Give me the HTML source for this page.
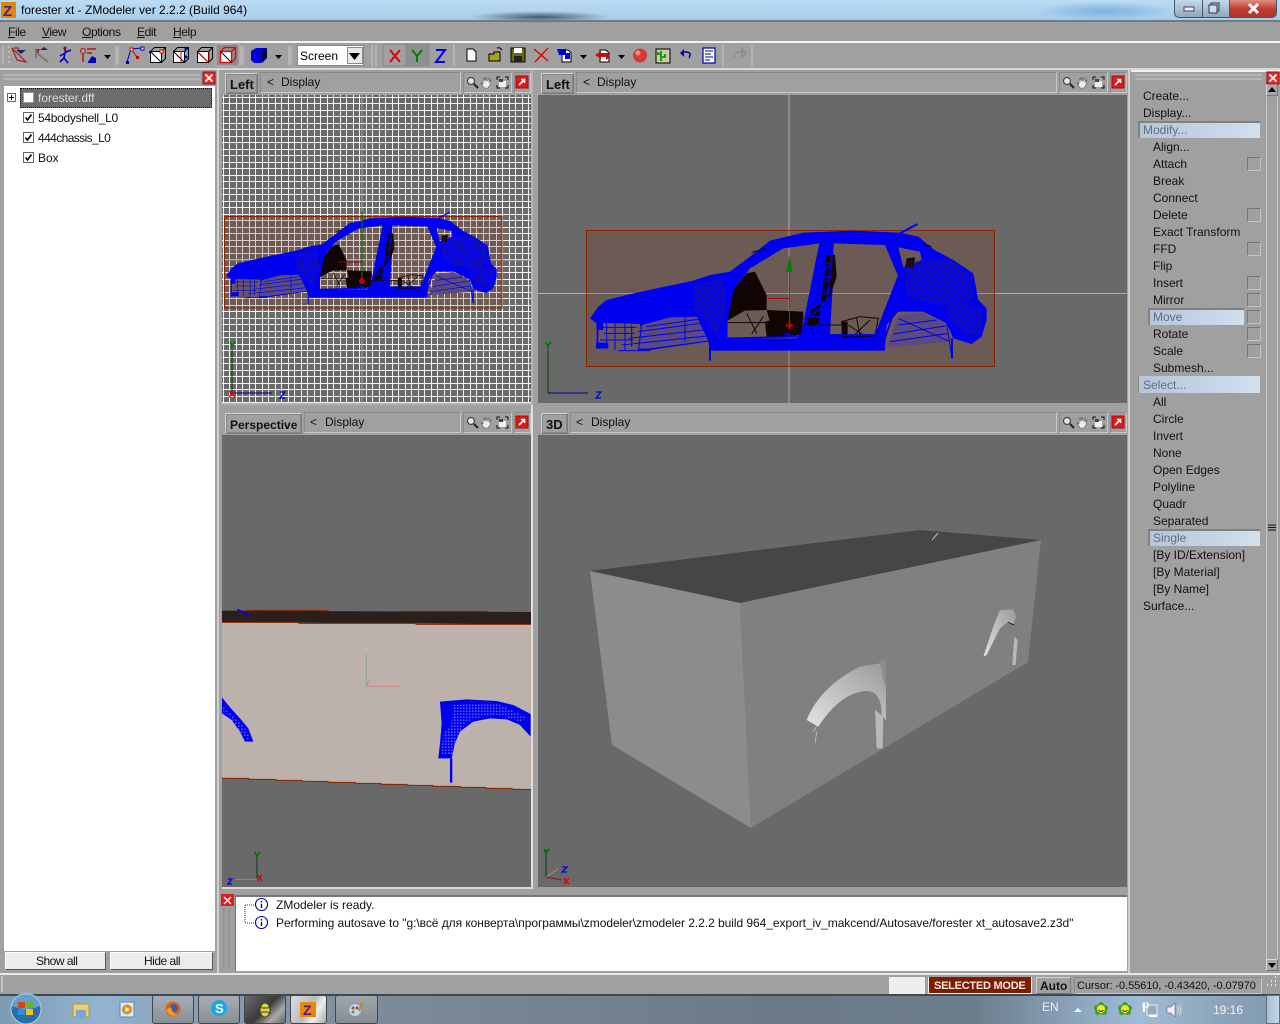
<!DOCTYPE html>
<html><head><meta charset="utf-8"><title>ZModeler</title>
<style>
html,body{margin:0;padding:0;width:1280px;height:1024px;overflow:hidden;background:#a0a0a0}
body{position:relative;font-family:"Liberation Sans","Noto Sans CJK SC",sans-serif;font-size:12px;color:#111}
.t{position:absolute;white-space:nowrap;line-height:14px;height:14px}
.m{letter-spacing:-.4px}
.b{font-weight:bold}
.h{position:absolute;box-sizing:border-box}
svg{position:absolute;left:0;top:0}
.hl{position:absolute;background:linear-gradient(90deg,#b4c6d8,#d2e0ee);border-top:2px solid #808080;border-left:2px solid #808080;box-sizing:border-box}
.g{color:#5f6e80}
.tab{position:absolute;box-sizing:border-box;border:1px solid #d4d4d4;border-right-color:#7a7a7a;border-bottom-color:#7a7a7a;outline:1px solid #888;outline-offset:-2px}
.grp{position:absolute;box-sizing:border-box;border:1px solid #8a8a8a;border-right-color:#c8c8c8;border-bottom-color:#c8c8c8}
.sq{position:absolute;width:14px;height:14px;box-sizing:border-box;border:1px solid #777;border-right-color:#c4c4c4;border-bottom-color:#c4c4c4;left:1247px}
</style></head><body>

<!-- title bar -->
<div class="h" style="left:0;top:0;width:1280px;height:21px;background:linear-gradient(180deg,#bcdcf4,#a6cbe8)"></div>
<div class="h" style="left:470px;top:11px;width:140px;height:12px;border-radius:50%;background:radial-gradient(ellipse at center,rgba(40,50,60,.75),rgba(40,50,60,0) 70%)"></div>
<div class="h" style="left:1040px;top:2px;width:130px;height:18px;background:radial-gradient(ellipse at center,rgba(110,170,220,.8),rgba(110,170,220,0) 75%)"></div>
<div class="h" style="left:0;top:20px;width:1280px;height:2px;background:#6e7c88"></div>
<div class="t" style="left:21px;top:3px;font-size:12px;color:#000">forester xt - ZModeler ver 2.2.2 (Build 964)</div>

<!-- window buttons -->
<div class="h" style="left:1174px;top:0;width:29px;height:18px;background:linear-gradient(180deg,#c4d8ea,#8fa8be);border:1px solid #47566a;border-top:0;border-radius:0 0 0 5px"></div>
<div class="h" style="left:1203px;top:0;width:27px;height:18px;background:linear-gradient(180deg,#c4d8ea,#8fa8be);border:1px solid #47566a;border-top:0;border-left:0"></div>
<div class="h" style="left:1230px;top:0;width:47px;height:18px;background:linear-gradient(180deg,#dc8f86,#c0392b 55%,#a83a30);border:1px solid #47566a;border-top:0;border-left:0;border-radius:0 0 5px 0"></div>

<!-- menu -->
<div class="t m" style="left:8px;top:25px"><u>F</u>ile</div>
<div class="t m" style="left:42px;top:25px"><u>V</u>iew</div>
<div class="t m" style="left:82px;top:25px"><u>O</u>ptions</div>
<div class="t m" style="left:137px;top:25px"><u>E</u>dit</div>
<div class="t m" style="left:173px;top:25px"><u>H</u>elp</div>
<div class="h" style="left:0;top:41px;width:1280px;height:2px;background:#f2f2f2"></div>
<div class="h" style="left:0;top:68px;width:1280px;height:2px;background:#d8d8d8"></div>

<!-- combo -->
<div class="h" style="left:297px;top:45px;width:67px;height:21px;background:#fff;border:1px solid #888"></div>
<div class="t" style="left:300px;top:49px;color:#000">Screen</div>
<div class="h" style="left:347px;top:47px;width:16px;height:17px;background:#e8e8e8;border:1px solid #8a8a8a"></div>

<!-- left panel -->
<div class="h" style="left:4px;top:86px;width:211px;height:865px;background:#fff"></div>
<div class="h" style="left:20px;top:88px;width:192px;height:20px;background:#6c6c6c;border:1px dotted #111"></div>
<div class="t" style="left:38px;top:91px;color:#dcdcdc">forester.dff</div>
<div class="t" style="left:38px;top:111px;letter-spacing:-.3px">54bodyshell_L0</div>
<div class="t" style="left:38px;top:131px;letter-spacing:-.6px">444chassis_L0</div>
<div class="t" style="left:38px;top:151px">Box</div>
<div class="h" style="left:5px;top:952px;width:101px;height:18px;background:#ececec;border:1px solid #fff;border-right-color:#555;border-bottom-color:#555"></div>
<div class="h" style="left:110px;top:952px;width:103px;height:18px;background:#ececec;border:1px solid #fff;border-right-color:#555;border-bottom-color:#555"></div>
<div class="t" style="left:36px;top:954px;letter-spacing:-.5px">Show all</div>
<div class="t" style="left:144px;top:954px;letter-spacing:-.5px">Hide all</div>

<!-- viewport backgrounds -->
<div class="h" style="left:222px;top:95px;width:309px;height:308px;background-color:#696969;background-image:linear-gradient(180deg,#f4f4f4 0,#f4f4f4 1px,transparent 1px,transparent 6px,#f4f4f4 6px,#f4f4f4 7px,transparent 7px),linear-gradient(90deg,#f4f4f4 0,#f4f4f4 1px,transparent 1px,transparent 6px,#f4f4f4 6px,#f4f4f4 7px,transparent 7px);background-size:13px 13px;background-position:1px 2px"></div>
<div class="h" style="left:538px;top:95px;width:589px;height:308px;background:#696969"></div>
<div class="h" style="left:222px;top:435px;width:309px;height:452px;background:#696969"></div>
<div class="h" style="left:538px;top:435px;width:589px;height:452px;background:#696969"></div>
<div class="h" style="left:531px;top:70px;width:2px;height:335px;background:#b4b4b4"></div>
<div class="h" style="left:531px;top:405px;width:2px;height:484px;background:#e0e0e0"></div>
<div class="h" style="left:1128px;top:70px;width:2px;height:905px;background:#cfcfcf"></div>
<div class="h" style="left:217px;top:70px;width:2px;height:903px;background:#d0d0d0"></div>
<div class="h" style="left:222px;top:887px;width:311px;height:2px;background:#d8d8d8"></div>
<div class="h" style="left:222px;top:403px;width:311px;height:2px;background:#b4b4b4"></div>

<!-- viewport headers -->
<div class="tab" style="left:225px;top:73px;width:33px;height:21px"></div>
<div class="grp" style="left:260px;top:72px;width:201px;height:21px"></div>
<div class="grp" style="left:463px;top:72px;width:49px;height:21px"></div>
<div class="grp" style="left:514px;top:72px;width:17px;height:21px"></div>
<div class="t b" style="left:230px;top:78px;font-size:13px">Left</div>
<div class="t" style="left:267px;top:75px">&lt;</div>
<div class="t" style="left:281px;top:75px">Display</div>

<div class="tab" style="left:541px;top:73px;width:33px;height:21px"></div>
<div class="grp" style="left:576px;top:72px;width:481px;height:21px"></div>
<div class="grp" style="left:1059px;top:72px;width:49px;height:21px"></div>
<div class="grp" style="left:1110px;top:72px;width:17px;height:21px"></div>
<div class="t b" style="left:546px;top:78px;font-size:13px">Left</div>
<div class="t" style="left:583px;top:75px">&lt;</div>
<div class="t" style="left:597px;top:75px">Display</div>

<div class="tab" style="left:225px;top:413px;width:77px;height:21px"></div>
<div class="grp" style="left:304px;top:412px;width:157px;height:21px"></div>
<div class="grp" style="left:463px;top:412px;width:49px;height:21px"></div>
<div class="grp" style="left:514px;top:412px;width:17px;height:21px"></div>
<div class="t b" style="left:230px;top:418px;font-size:12px">Perspective</div>
<div class="t" style="left:310px;top:415px">&lt;</div>
<div class="t" style="left:325px;top:415px">Display</div>

<div class="tab" style="left:541px;top:413px;width:27px;height:21px"></div>
<div class="grp" style="left:570px;top:412px;width:487px;height:21px"></div>
<div class="grp" style="left:1059px;top:412px;width:49px;height:21px"></div>
<div class="grp" style="left:1110px;top:412px;width:17px;height:21px"></div>
<div class="t b" style="left:546px;top:418px;font-size:13px">3D</div>
<div class="t" style="left:576px;top:415px">&lt;</div>
<div class="t" style="left:591px;top:415px">Display</div>

<!-- log -->
<div class="h" style="left:235px;top:895px;width:892px;height:76px;background:#fff;border-top:2px solid #777;border-left:1px solid #777"></div>
<div class="t" style="left:276px;top:898px">ZModeler is ready.</div>
<div class="t" style="left:276px;top:916px;letter-spacing:-.05px">Performing autosave to "g:\всё для конверта\программы\zmodeler\zmodeler 2.2.2 build 964_export_iv_makcend/Autosave/forester xt_autosave2.z3d"</div>

<!-- right panel -->
<div class="h" style="left:1131px;top:70px;width:149px;height:2px;background:#eee"></div>
<div class="h" style="left:1266px;top:97px;width:1px;height:862px;background:#c8c8c8"></div>
<div class="h" style="left:1277px;top:97px;width:1px;height:862px;background:#c8c8c8"></div>
<div class="h" style="left:1266px;top:84px;width:12px;height:12px;background:#a8a8a8;border:1px solid #d8d8d8;border-right-color:#777;border-bottom-color:#777"></div>
<div class="h" style="left:1266px;top:959px;width:12px;height:12px;background:#a8a8a8;border:1px solid #d8d8d8;border-right-color:#777;border-bottom-color:#777"></div>
<div class="hl" style="left:1138px;top:121px;width:122px;height:17px"></div>
<div class="hl" style="left:1148px;top:308px;width:96px;height:17px"></div>
<div class="hl" style="left:1138px;top:376px;width:122px;height:17px;border-top:0;border-left:1px solid #888"></div>
<div class="hl" style="left:1148px;top:529px;width:112px;height:17px"></div>
<div class="sq" style="top:157px"></div><div class="sq" style="top:208px"></div><div class="sq" style="top:242px"></div>
<div class="sq" style="top:276px"></div><div class="sq" style="top:293px"></div><div class="sq" style="top:310px"></div>
<div class="sq" style="top:327px"></div><div class="sq" style="top:344px"></div>
<div class="t" style="left:1143px;top:89px">Create...</div>
<div class="t" style="left:1143px;top:106px">Display...</div>
<div class="t g" style="left:1143px;top:123px">Modify...</div>
<div class="t" style="left:1153px;top:140px">Align...</div>
<div class="t" style="left:1153px;top:157px">Attach</div>
<div class="t" style="left:1153px;top:174px">Break</div>
<div class="t" style="left:1153px;top:191px">Connect</div>
<div class="t" style="left:1153px;top:208px">Delete</div>
<div class="t" style="left:1153px;top:225px">Exact Transform</div>
<div class="t" style="left:1153px;top:242px">FFD</div>
<div class="t" style="left:1153px;top:259px">Flip</div>
<div class="t" style="left:1153px;top:276px">Insert</div>
<div class="t" style="left:1153px;top:293px">Mirror</div>
<div class="t g" style="left:1153px;top:310px">Move</div>
<div class="t" style="left:1153px;top:327px">Rotate</div>
<div class="t" style="left:1153px;top:344px">Scale</div>
<div class="t" style="left:1153px;top:361px">Submesh...</div>
<div class="t g" style="left:1143px;top:378px">Select...</div>
<div class="t" style="left:1153px;top:395px">All</div>
<div class="t" style="left:1153px;top:412px">Circle</div>
<div class="t" style="left:1153px;top:429px">Invert</div>
<div class="t" style="left:1153px;top:446px">None</div>
<div class="t" style="left:1153px;top:463px">Open Edges</div>
<div class="t" style="left:1153px;top:480px">Polyline</div>
<div class="t" style="left:1153px;top:497px">Quadr</div>
<div class="t" style="left:1153px;top:514px">Separated</div>
<div class="t g" style="left:1153px;top:531px">Single</div>
<div class="t" style="left:1153px;top:548px">[By ID/Extension]</div>
<div class="t" style="left:1153px;top:565px">[By Material]</div>
<div class="t" style="left:1153px;top:582px">[By Name]</div>
<div class="t" style="left:1143px;top:599px">Surface...</div>

<!-- status -->
<div class="h" style="left:0;top:973px;width:1280px;height:2px;background:#e8e8e8"></div>
<div class="h" style="left:889px;top:977px;width:36px;height:17px;background:#eee"></div>
<div class="h" style="left:928px;top:977px;width:104px;height:17px;background:#7c1c00;border:1px solid #f2f2f2;border-top:0"></div>
<div class="t b" style="left:934px;top:979px;color:#f6e8e0;font-size:11px;letter-spacing:-.25px">SELECTED MODE</div>
<div class="grp" style="left:1036px;top:977px;width:35px;height:17px;border-color:#d0d0d0 #777 #777 #d0d0d0"></div>
<div class="t b" style="left:1040px;top:979px">Auto</div>
<div class="grp" style="left:1074px;top:977px;width:188px;height:17px"></div>
<div class="t" style="left:1077px;top:979px;font-size:11px;letter-spacing:-.08px">Cursor: -0.55610, -0.43420, -0.07970</div>

<!-- taskbar -->
<div class="h" style="left:0;top:994px;width:1280px;height:30px;background:linear-gradient(90deg,#7d9ab4 0,#93b4d0 8%,#8aa0b4 14%,#7d8a98 30%,#6c7a88 60%,#6d7c8a 76%,#8aa4bc 84%,#a0bcd4 89%,#8aa2b8 96%,#8099b0 100%)"></div>
<div class="h" style="left:0;top:994px;width:1280px;height:2px;background:#3c4854"></div>
<div class="h" style="left:152px;top:995px;width:42px;height:29px;border:1px solid #3e4650;border-radius:3px;background:linear-gradient(180deg,#a8aeb6,#888e96)"></div>
<div class="h" style="left:198px;top:995px;width:42px;height:29px;border:1px solid #3e4650;border-radius:3px;background:linear-gradient(180deg,#a8aeb6,#888e96)"></div>
<div class="h" style="left:244px;top:995px;width:42px;height:29px;border:1px solid #3e4650;border-radius:3px;background:linear-gradient(135deg,#6a6a6a,#3a3a3a 50%,#aaa 75%,#666)"></div>
<div class="h" style="left:290px;top:995px;width:37px;height:29px;border:1px solid #3e4650;border-radius:3px;background:linear-gradient(120deg,#ddd,#bbb 50%,#eee 70%,#aaa)"></div>
<div class="h" style="left:335px;top:995px;width:43px;height:29px;border:1px solid #3e4650;border-radius:3px;background:linear-gradient(180deg,#a0a6ae,#868c94)"></div>
<div class="t" style="left:1042px;top:1000px;color:#f0f0f0">EN</div>
<div class="t" style="left:1213px;top:1003px;color:#f4f4f4">19:16</div>
<div class="h" style="left:1266px;top:995px;width:14px;height:29px;background:linear-gradient(90deg,#a8c0d4,#c4d6e6);border:1px solid #5e7084"></div>

<svg width="1280" height="1024" viewBox="0 0 1280 1024" xmlns="http://www.w3.org/2000/svg">
<defs>
<pattern id="dots" width="8" height="8" patternUnits="userSpaceOnUse"><rect width="3" height="3" fill="#3a2a60"/><rect x="4" y="4" width="2" height="2" fill="#3a2a60"/></pattern>
<pattern id="wd" width="9" height="9" patternUnits="userSpaceOnUse"><rect x="1" y="2" width="3" height="3" fill="#d8d8f0"/></pattern>
<linearGradient id="ar" x1="0" y1="1" x2="1" y2="0"><stop offset="0" stop-color="#e2e2e2"/><stop offset=".6" stop-color="#b8b8b8"/><stop offset="1" stop-color="#9a9a9a"/></linearGradient>
<g id="car">
<path fill="#0000f0" fill-rule="evenodd" d="M60,325 L85,290 L110,270 L170,255 L260,235 L370,212 L420,195 L480,185 L540,140 L600,92 L700,68 L850,62 L990,68 L1045,80 L1090,118 L1150,150 L1210,190 L1225,270 L1250,295 L1250,330 L1235,380 L1205,402 L1150,385 L1130,340 L1060,305 L985,305 L950,345 L945,422 L420,422 L415,395 L240,420 L145,425 L80,415 L80,340 Z
M470,385 L470,340 L490,240 L540,175 L640,115 L748,100 L700,340 L680,385 Z
M790,100 L945,105 L985,200 L920,372 L780,375 L790,200 Z
M985,112 L1050,125 L1055,150 L1000,172 Z"/>
<path fill="#5a4a80" d="M150,418 L215,345 L300,322 L380,320 L415,392 L240,415 Z M950,412 L985,318 L1060,308 L1130,345 L1143,395 Z"/>
<path fill="#6a5860" d="M85,338 L210,342 L205,422 L145,425 L85,415 Z"/>
<path fill="none" stroke="#0000f0" stroke-width="3" d="M155,405 L410,378 M175,385 L400,360 M205,365 L390,340 M230,350 L385,328 M960,395 L1135,370 M970,372 L1125,348 M985,345 L1100,330 M985,325 L1140,395 M215,345 L205,425 M345,320 L345,395 M1130,340 L1146,445 M85,338 H210 M95,352 H200 M100,370 H195 M90,390 H190 M110,340 V410 M135,340 V420 M165,340 V420 M185,345 V410 M145,422 H240"/>
<path fill="#0000f0" d="M78,398 L115,398 L115,415 L78,415 Z M80,335 L100,335 L100,360 L80,360 Z"/>
<path fill="none" stroke="#0000f0" stroke-width="6" d="M420,395 L420,452 M1146,385 L1146,445 M990,70 L1043,42"/>
<path fill="#120604" d="M472,330 L490,240 L530,190 L555,185 L590,255 L590,300 L525,302 L472,332 Z M590,300 L700,305 L700,330 L600,335 Z M585,335 L650,320 L700,322 L695,370 L670,380 L590,380 Z M770,135 L795,135 L800,200 L780,260 L725,300 L705,340 L745,350 Z M1010,145 L1035,142 L1032,175 L1005,172 Z"/>
<path fill="none" stroke="#120604" stroke-width="3" d="M815,335 L870,320 L925,325 L915,378 L825,382 Z M835,345 L880,375 M860,325 L870,378 M900,330 L850,378 M470,338 L585,338 M700,345 L815,345 M530,310 L560,370 M580,320 L545,372 M545,128 L585,115 M1060,100 L1085,110"/>
<rect x="815" y="335" width="18" height="48" fill="#120604"/>
<path fill="none" stroke="#0000f0" stroke-width="4" d="M752,100 L700,385 M790,100 L760,385 M715,320 L770,320 M722,280 L778,280 M730,240 L782,240 M738,200 L785,200 M745,160 L788,160 M748,130 L790,130 M710,350 L765,350 M700,385 L770,320 M715,320 L778,280 M722,280 L782,240 M730,240 L785,200 M738,200 L788,160"/>
<path fill="none" stroke="#0000f0" stroke-width="5" d="M985,200 L915,380 M1005,210 L945,385 M955,105 L1000,210 M470,190 L470,390 M490,230 L470,330 M640,370 L680,380 L470,385 M780,375 L920,375 M700,95 L950,92"/>
<path fill="url(#dots)" d="M370,225 L460,205 L470,300 L440,380 L405,330 L370,300 Z M1000,150 L1140,145 L1205,200 L1210,270 L1120,290 L1010,260 Z M1130,260 L1240,300 L1230,375 L1190,375 L1130,320 Z"/>
</g>
<g id="zoomi"><circle cx="5" cy="5" r="3.5" fill="#e8e8e8" stroke="#444" stroke-width="1.2"/><path d="M8,8 L12,12" stroke="#222" stroke-width="2"/>
<path d="M17,5 L18,2 L19,5 L20,1 L21,5 L23,2 L23,6 L25,4 L24,9 L22,12 L18,12 L15,7 L17,8 Z" fill="#eee" stroke="#555" stroke-width=".6"/>
<path d="M31,4 V1 H34 M39,1 H42 V4 M42,9 V12 H39 M34,12 H31 V9" fill="none" stroke="#111"/><rect x="33" y="5" width="7" height="6" fill="#eee"/><rect x="33" y="3" width="4" height="3" fill="#444"/></g>
<g id="redb"><rect x="0" y="0" width="12" height="12" fill="#e01818" stroke="#a01010"/><path d="M3,9 L8,4 M5,3.5 H8.5 V7" stroke="#fff" stroke-width="1.6" fill="none"/></g>
<g id="redx"><rect x="0" y="0" width="12" height="12" fill="#e03030" stroke="#901010"/><path d="M2.5,2.5 L9.5,9.5 M9.5,2.5 L2.5,9.5" stroke="#fff" stroke-width="1.6"/></g>
<g id="chk"><rect x=".5" y=".5" width="10" height="10" fill="#fff" stroke="#666"/><path d="M2.5,5.5 L4.5,8 L8.5,2.5" stroke="#000" stroke-width="1.5" fill="none"/></g>
<g id="info"><circle cx="6.5" cy="6.5" r="6" fill="#fff" stroke="#0000a0" stroke-width="1.1"/><path d="M6.5,3 V4.5 M6.5,5.8 V10" stroke="#0000a0" stroke-width="1.4"/></g>
<g id="cube"><rect x="0.5" y="4.5" width="11" height="11" fill="#fff" stroke="#000"/><path d="M.5,4.5 L4.5,.5 H15.5 V11.5 L11.5,15.5 M11.5,4.5 L15.5,.5" fill="none" stroke="#000"/><path d="M.5,4.5 L11.5,15.5" stroke="#000"/></g>
<g id="flw"><circle cx="7" cy="3" r="3" fill="#3aa030"/><circle cx="3" cy="6" r="3" fill="#3aa030"/><circle cx="11" cy="6" r="3" fill="#3aa030"/><circle cx="4" cy="10" r="3" fill="#3aa030"/><circle cx="10" cy="10" r="3" fill="#3aa030"/><circle cx="7" cy="7" r="4" fill="#f4e820"/><path d="M4.5,8 Q7,11 9.5,8" stroke="#333" fill="none"/></g>
</defs>

<!-- title icon -->
<rect x="1" y="2" width="15" height="16" fill="#e0860a"/><text x="3" y="16" font-family="Liberation Sans" font-weight="bold" font-size="15" fill="#4a1f8a">Z</text>
<!-- window glyphs -->
<rect x="1184" y="7" width="10" height="4" fill="#eef" stroke="#445"/>
<rect x="1211" y="3" width="8" height="8" fill="none" stroke="#334"/><rect x="1209" y="5" width="8" height="8" fill="#cde" stroke="#334"/>
<path d="M1249,4 L1258,13 M1258,4 L1249,13" stroke="#fff" stroke-width="3"/>

<!-- toolbar grips & seps -->
<g fill="none" stroke="#c8c8c8">
<path d="M3,46 V64 M116,46 V65 M118,46 V65 M241,46 V65 M243,46 V65 M289,46 V65 M291,46 V65"/>
<path d="M372,45 V66 M376,45 V66 M454,45 V66 M723,45 V66 M752,45 V66"/>
</g>
<path d="M10,47 H8 M10,52 H8 M10,57 H8 M10,62 H8" stroke="#d8d8d8"/>
<rect x="216" y="44" width="23" height="22" fill="#8c8c8c" stroke="#b8b8b8"/>
<rect x="383" y="44" width="23" height="22" fill="none" stroke="#8a8a8a"/>
<rect x="406" y="44" width="23" height="22" fill="#8f8f8f" stroke="#8a8a8a"/>

<!-- toolbar icons -->
<path d="M12,48 L17,60 L26,62 Z M14,48 H18 L21,53" fill="none" stroke="#a02020" stroke-width="1.2"/><path d="M16,50 H26 L21,54 Z" fill="#222266"/>
<path d="M35,49 L40,49 L38,54 Z" fill="#c02020"/><path d="M38,54 L48,62 M36,50 V58" stroke="#777" stroke-width="2"/><path d="M40,50 H48 L44,47 Z" fill="#222266"/>
<path d="M64,48 L66,52 L71,50 M65,52 L64,58 L60,62 M64,58 L68,63 M65,53 L60,56" stroke="#0000c0" stroke-width="1.6" fill="none"/><circle cx="65" cy="48" r="1.5" fill="#c00000"/>
<circle cx="83" cy="51" r="2.5" fill="none" stroke="#c01010"/><path d="M83,54 V62 M87,49 H96 M87,53 H92" stroke="#c01010" stroke-width="1.5"/><path d="M88,62 L92,56 L96,58 V63 H88 Z" fill="#0000c0"/>
<path d="M104,55 H111 L107.500,59 Z M275,55 H282 L278.500,59 Z M580,55 H587 L583.500,59 Z M618,55 H625 L621.500,59 Z"/>
<path d="M127,62 L131,49 L142,48" fill="none" stroke="#0000c0"/><path d="M131,49 L137,57" stroke="#c00" /><rect x="130" y="48" width="3" height="3" fill="#fff" stroke="#c00"/><rect x="141" y="47" width="3" height="3" fill="#fff" stroke="#00c"/><rect x="136" y="56" width="3" height="3" fill="#c00"/><rect x="126" y="61" width="3" height="3" fill="#00c"/>
<use href="#cube" x="150" y="47"/><rect x="160" y="50" width="3" height="3" fill="#fff" stroke="#c00"/><rect x="149" y="51" width="2" height="2" fill="#00c"/>
<use href="#cube" x="173" y="47"/><circle cx="186" cy="49" r="1.5" fill="#00c"/><circle cx="186" cy="57" r="1.5" fill="#00c"/><path d="M181,51 V62" stroke="#d00"/>
<use href="#cube" x="197" y="47"/><path d="M197.500,52 L208,62 M209,51 V62" stroke="#e00"/>
<g transform="translate(220,47)"><rect x="0.5" y="4.500" width="11" height="11" fill="#fff" stroke="#e00" stroke-width="1.300"/><path d="M.5,4.500 L4.500,.5 H15.500 V11.500 L11.500,15.500 M11.500,4.500 L15.500,.5" fill="none" stroke="#e00" stroke-width="1.300"/><path d="M.5,4.500 L11.500,15.500" stroke="#000"/></g>
<path d="M251,51 L256,48 H267 V58 L261,63 H254 L251,60 Z" fill="#0000d8" /><path d="M264,50 L267,48 V58 L262,63 V52 Z" fill="#000048"/>
<path d="M349,53 H360 L354.500,60 Z" fill="#000"/>
<!-- X Y Z -->
<g stroke-width="2" fill="none"><path d="M390,50 L400,62 M400,50 L390,62" stroke="#e00000"/><path d="M412,50 L417,56 L422,50 M417,56 V62" stroke="#008000"/><path d="M436,50 H445 L436,62 H445" stroke="#0000f0"/></g>
<!-- file ops -->
<path d="M467,49 H473 L476,52 V61 H467 Z" fill="#fff" stroke="#000"/>
<path d="M489,54 H494 V52 H500 V61 H489 Z" fill="#a8a020" stroke="#000"/><path d="M497,48 Q500,47 502,50" fill="none" stroke="#000"/>
<rect x="511" y="48" width="14" height="14" fill="#706810" stroke="#000"/><rect x="514" y="48" width="8" height="5" fill="#fff"/><rect x="514" y="56" width="8" height="6" fill="#222"/>
<path d="M534,49 L548,61 M548,48 L535,62" stroke="#e00000" stroke-width="1.300"/>
<path d="M562,50 H568 L571,53 V62 H562 Z" fill="#fff" stroke="#000"/><path d="M557,49 H566 V53 H570 V59 H565 V55 H559 Z" fill="#0000e0"/>
<path d="M600,50 H606 L609,53 V62 H600 Z" fill="#fff" stroke="#000"/><path d="M595,55 L601,51 V53 H609 V58 L606,60 V57 H601 V59 Z" fill="#c01010"/>
<circle cx="640" cy="55.500" r="7" fill="#d83838"/><circle cx="638" cy="53" r="2.500" fill="#f09090"/>
<rect x="656" y="49" width="14" height="14" fill="#cdc8a0" stroke="#000"/><path d="M661,51 V61 M661,54 H658 V52 M661,57 H665 V54" stroke="#10a010" stroke-width="2" fill="none"/>
<path d="M689,58 Q692,52 686,52 L682,52" fill="none" stroke="#0000a0" stroke-width="1.500"/><path d="M680,53 L684,49 L684,57 Z" fill="#0000a0"/>
<rect x="703" y="48" width="12" height="15" fill="#fff" stroke="#0000a0" stroke-width="1.200"/><path d="M705,51 H713 M705,54 H711 M705,57 H713 M705,60 H710" stroke="#0000a0"/>
<path d="M735,58 Q732,52 740,52 H744 M746,53 L742,49 L742,57 Z" fill="none" stroke="#888" stroke-width="1.300"/>

<!-- grip lines -->
<path d="M3,75 H200 M3,79 H200 M1135,75 H1262 M1135,79 H1262" stroke="#c8c8c8"/>
<path d="M224,908 V968 M229,908 V968" stroke="#888"/>
<use href="#redx" x="203" y="72"/>
<use href="#redx" x="1267" y="72"/>
<rect x="221" y="894" width="13" height="12" fill="#d82020"/>
<path d="M224,897 L231,904 M231,897 L224,904" stroke="#fff" stroke-width="1.400"/>
<path d="M1268,92 L1272,87 L1276,92 Z M1268,963 L1276,963 L1272,968 Z"/>
<path d="M1268,525 H1276 M1268,527.500 H1276 M1268,530 H1276" stroke="#111"/>

<!-- tree icons -->
<rect x="7.500" y="93.500" width="8" height="8" fill="#fff" stroke="#666"/><path d="M9,97.500 H14 M11.500,95 V100" stroke="#000"/>
<rect x="23.500" y="92.500" width="10" height="10" fill="#fff" stroke="#999"/>
<use href="#chk" x="23" y="112"/><use href="#chk" x="23" y="132"/><use href="#chk" x="23" y="152"/>

<!-- viewport icons -->
<use href="#zoomi" x="466" y="76"/><use href="#zoomi" x="1062" y="76"/><use href="#zoomi" x="466" y="416"/><use href="#zoomi" x="1062" y="416"/>
<use href="#redb" x="516" y="76"/><use href="#redb" x="1112" y="76"/><use href="#redb" x="516" y="416"/><use href="#redb" x="1112" y="416"/>

<!-- top-left viewport -->
<path d="M362,95 V403 M222,260 H531" stroke="#a8a8a8"/>
<rect x="224.500" y="216.500" width="277.500" height="91.500" fill="#782000" fill-opacity=".2" stroke="#8b2500"/>
<use href="#car" transform="translate(212.600,202.900) scale(.2273,.2245)"/>
<path d="M362,212 V281" stroke="#008000"/><path d="M338,262 H362" stroke="#801010"/><circle cx="362" cy="281" r="3" fill="#c00000"/>
<path d="M232,350 V393" stroke="#004000"/><path d="M232,393 H272" stroke="#0000a0"/>
<path d="M230,342 L232,346 L235,342 M232,346 V349" stroke="#007000" stroke-width="1.500" fill="none"/>
<path d="M229,391 L235,397 M235,391 L229,397" stroke="#f00000" stroke-width="1.500"/>
<path d="M280,392 H285 L280,398 H285" stroke="#0000f0" stroke-width="1.300" fill="none"/>

<!-- top-right viewport -->
<path d="M789,95 V403 M538,293.500 H1127" stroke="#b0b0b0"/>
<rect x="586.500" y="230.500" width="408" height="136" fill="#782000" fill-opacity=".2" stroke="#8b2500"/>
<use href="#car" transform="translate(570,210) scale(.3333)"/>
<path d="M789.500,256 V326" stroke="#008000"/><path d="M789.500,256 L792.500,272 H786.500 Z" fill="#008000"/><path d="M768,298.500 H789.500" stroke="#a01010"/><path d="M789.500,322 V329 M786,325.500 H793" stroke="#d00000" stroke-width="2"/>
<path d="M548,350 V393" stroke="#004000"/><path d="M548,393 H588" stroke="#0000a0"/>
<path d="M546,342 L548,346 L551,342 M548,346 V349" stroke="#007000" stroke-width="1.500" fill="none"/>
<path d="M596,392 H601 L596,398 H601" stroke="#0000f0" stroke-width="1.300" fill="none"/>

<!-- perspective -->
<g transform="translate(220,590) scale(.3333)">
<path d="M6,62 L933,66 V103 L6,97 Z" fill="#2b1f1c"/>
<path d="M6,97 L933,103 V598 L6,563 Z" fill="#bdb1ab"/>
<path d="M78,61 H327 M552,64 H803 M6,97 H237 L237,100 H588 V103 H933" stroke="#8b2500" stroke-width="3" fill="none"/>
<path d="M6,565 H86 V568 H168 V571 H246 V574 H324 V577 H405 V580 H483 V583 H561 V586 H639 V589 H720 V592 H798 V595 H876 V598 H933" stroke="#8b2500" stroke-width="3" fill="none"/>
<path d="M439,192 V289" stroke="#8fa888" stroke-width="3"/><path d="M439,289 H540" stroke="#c88a80" stroke-width="3"/><path d="M439,289 L450,268" stroke="#9a90b8" stroke-width="3"/>
<path d="M52,58 L88,76" stroke="#0000f0" stroke-width="5"/>
<path d="M660,335 L740,328 L830,333 L880,345 L932,372 L932,440 L900,405 L860,388 L810,385 L760,395 L720,425 L705,460 L695,505 L655,505 L660,460 L665,400 Z" fill="#0000f0"/>
<path d="M700,345 L830,340 L925,385 L900,395 L850,378 L790,378 L740,395 L715,430 L700,495 L665,495 L670,430 L695,400 Z" fill="url(#wd)"/>
<rect x="690" y="505" width="7" height="73" fill="#0000f0"/>
<path d="M6,322 L30,352 L60,385 L85,415 L100,455 L75,455 L60,425 L35,390 L6,370 Z" fill="#0000f0"/>
<path d="M6,345 L80,420 L90,450 L70,440 L30,380 L6,360 Z" fill="url(#wd)"/>
</g>
<path d="M257,855 V880" stroke="#004000"/><path d="M236,879.500 H257" stroke="#888"/>
<path d="M255,852 L257,856 L260,852" stroke="#007000" stroke-width="1.500" fill="none"/>
<path d="M258,875 L262,881 M262,875 L258,881" stroke="#e00000" stroke-width="1.300"/>
<path d="M228,879 H232 L228,884 H232" stroke="#0000f0" stroke-width="1.300" fill="none"/>

<!-- 3D box -->
<path d="M590,571 L920,530 L1041,540 L740,603 Z" fill="#464646"/>
<path d="M590,571 L740,603 L751,828 L612,745 Z" fill="#8c8c8c"/>
<path d="M740,603 L1041,540 L1028,662 L751,828 Z" fill="#808080"/>
<path d="M932,540 L938,533" stroke="#bbb"/>
<g transform="translate(780,590) scale(.3333)">
<path d="M80,390 Q120,290 240,230 L300,220 L318,295 L318,390 L305,375 Q305,300 255,303 Q180,310 115,410 Z" fill="url(#ar)"/>
<path d="M300,212 L316,212 L320,295 L310,270 Z" fill="#8e8e8e"/>
<path d="M285,360 L310,380 L308,475 L290,475 Z" fill="#b8b8b8"/>
<path d="M100,425 L110,408 M105,460 L110,425" stroke="#ccc" stroke-width="2"/>
<path d="M660,60 L700,58 L708,80 L700,105 L685,95 L660,115 L620,195 L610,200 L640,110 Z" fill="url(#ar)"/>
<path d="M685,97 L702,105" stroke="#222" stroke-width="3"/>
<path d="M703,140 L713,150 L707,225 L697,225 Z" fill="#b8b8b8"/>
</g>
<path d="M546,850 V877" stroke="#004000"/><path d="M546,877 L558,869" stroke="#999"/><path d="M546,877 L562,880" stroke="#a01010"/>
<path d="M544,849 L546,853 L549,849" stroke="#007000" stroke-width="1.500" fill="none"/>
<path d="M562,867 H567 L562,872 H567" stroke="#0000f0" stroke-width="1.300" fill="none"/>
<path d="M564,878 L569,884 M569,878 L564,884" stroke="#e00000" stroke-width="1.500"/>

<!-- log icons -->
<path d="M245,905 H255 M245,905 V923 H255" stroke="#333" stroke-dasharray="1 1" fill="none"/>
<use href="#info" x="255" y="898"/><use href="#info" x="255" y="916"/>

<!-- status grip -->
<path d="M2,976 V992" stroke="#e8e8e8"/>
<path d="M1275,977 h1 M1271,981 h1 M1275,981 h1 M1267,985 h1 M1271,985 h1 M1275,985 h1" stroke="#e8e8e8" stroke-width="2"/>

<!-- start orb -->
<circle cx="26" cy="1009" r="15" fill="#2a6ea8" stroke="#b8d0e0" stroke-width="1"/>
<path d="M12,1006 A14,14 0 0 1 40,1006 Q26,1012 12,1006 Z" fill="#8cc0e0" fill-opacity=".6"/>
<rect x="18" y="1002" width="7" height="6" fill="#e04020"/><rect x="26" y="1002" width="7" height="6" fill="#70b030"/><rect x="18" y="1009" width="7" height="6" fill="#3090e0"/><rect x="26" y="1009" width="7" height="6" fill="#f0c020"/>
<!-- taskbar icons -->
<rect x="73" y="1004" width="16" height="13" fill="#e8d070" stroke="#b09840"/><rect x="76" y="1010" width="10" height="8" fill="#78a8d0"/>
<rect x="120" y="1002" width="14" height="15" fill="#d8eaf4" stroke="#4090c8"/><circle cx="127" cy="1009.500" r="5" fill="#f08810"/><path d="M125.500,1007 L130,1009.500 L125.500,1012 Z" fill="#fff"/>
<circle cx="173" cy="1009" r="7.500" fill="#e06010"/><circle cx="174" cy="1008" r="4" fill="#3060a8"/><path d="M166,1010 Q170,1018 178,1015 Q172,1014 171,1007 Z" fill="#f0a020"/>
<circle cx="219" cy="1008" r="8" fill="#18a8e8"/><text x="215" y="1013" font-family="Liberation Sans" font-weight="bold" font-size="13" fill="#fff">S</text>
<ellipse cx="265" cy="1010" rx="5" ry="7" fill="#d8d050" stroke="#504010"/><path d="M262,1008 H268 M262,1012 H268 M259,1006 L262,1008 M271,1006 L268,1008 M259,1014 L262,1012 M271,1014 L268,1012" stroke="#504010" fill="none"/>
<rect x="300" y="1002" width="16" height="15" fill="#e88808"/><text x="303" y="1015" font-family="Liberation Sans" font-weight="bold" font-size="14" fill="#4a1f8a">Z</text>
<circle cx="355" cy="1010" r="6.500" fill="#c8d4dc" stroke="#8098a8"/><circle cx="353" cy="1008" r="1.500" fill="#d04040"/><circle cx="357" cy="1008" r="1.500" fill="#4060c0"/><circle cx="353" cy="1012" r="1.500" fill="#40a040"/><path d="M359,1011 L362,1002" stroke="#d08020" stroke-width="2"/>
<!-- tray -->
<path d="M1074,1012 L1078,1008 L1082,1012 Z" fill="#eef"/>
<use href="#flw" x="1094" y="1002"/><use href="#flw" x="1118" y="1002"/>
<rect x="1147" y="1005" width="10" height="10" fill="#9ab" stroke="#eee"/><path d="M1144,1004 V1012 M1149,1016 H1157" stroke="#fff" stroke-width="2"/><rect x="1143" y="1003" width="5" height="4" fill="none" stroke="#fff"/>
<path d="M1167,1007 H1171 L1175,1003 V1017 L1171,1013 H1167 Z" fill="#eef" stroke="#445" stroke-width=".5"/><path d="M1177,1007 Q1180,1010 1177,1013 M1179,1005 Q1183,1010 1179,1015" stroke="#dde" fill="none"/>
</svg>
</body></html>
